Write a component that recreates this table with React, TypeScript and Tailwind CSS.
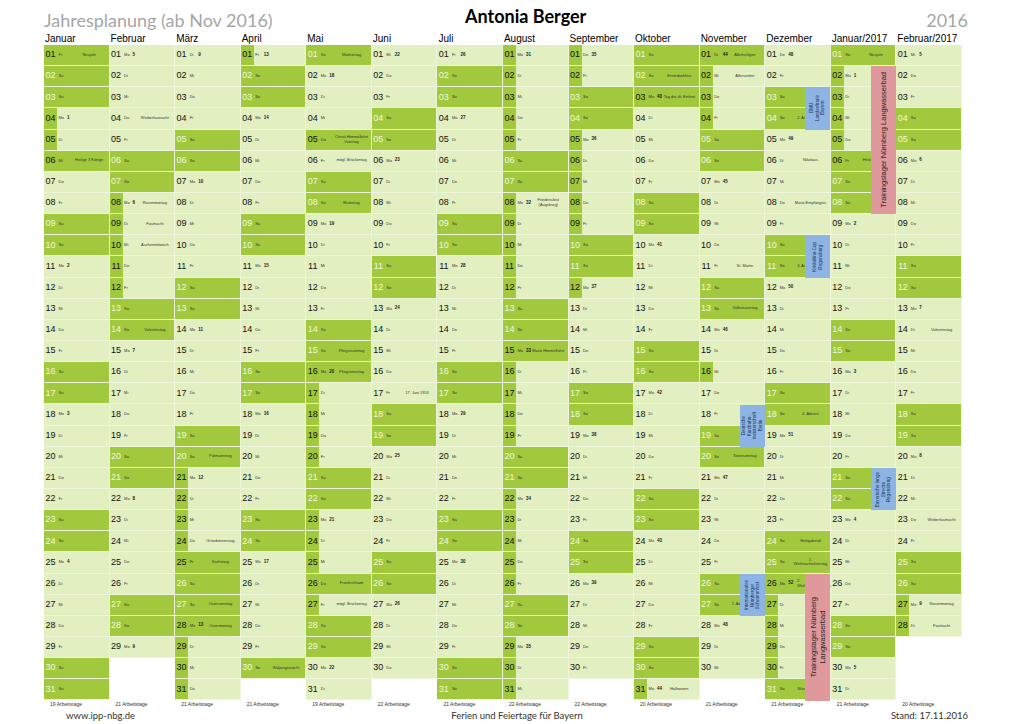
import React from "react";
import clsx from "clsx";

type Month = {
  label: string;
  y: number;
  m: number;
  days: number;
  work: number;
  events: Record<number, string>;
};

const months: Month[] = [
  { label: "Januar", y: 2016, m: 0, days: 31, work: 19, events: { 1: "Neujahr", 6: "Heilige 3 Könige" } },
  {
    label: "Februar", y: 2016, m: 1, days: 29, work: 21,
    events: { 4: "Weiberfastnacht", 8: "Rosenmontag", 9: "Fastnacht", 10: "Aschermittwoch", 14: "Valentinstag" },
  },
  {
    label: "März", y: 2016, m: 2, days: 31, work: 21,
    events: { 20: "Palmsonntag", 24: "Gründonnerstag", 25: "Karfreitag", 27: "Ostersonntag", 28: "Ostermontag" },
  },
  { label: "April", y: 2016, m: 3, days: 30, work: 21, events: { 30: "Walpurgisnacht" } },
  {
    label: "Mai", y: 2016, m: 4, days: 31, work: 19,
    events: {
      1: "Maifeiertag", 5: "Christi Himmelfahrt Vatertag", 6: "mögl. Brückentag", 8: "Muttertag",
      15: "Pfingstsonntag", 16: "Pfingstmontag", 26: "Fronleichnam", 27: "mögl. Brückentag",
    },
  },
  { label: "Juni", y: 2016, m: 5, days: 30, work: 22, events: { 17: "17. Juni 1953" } },
  { label: "Juli", y: 2016, m: 6, days: 31, work: 21, events: {} },
  { label: "August", y: 2016, m: 7, days: 31, work: 22, events: { 8: "Friedensfest (Augsburg)", 15: "Mariä Himmelfahrt" } },
  { label: "September", y: 2016, m: 8, days: 30, work: 22, events: {} },
  { label: "Oktober", y: 2016, m: 9, days: 31, work: 20, events: { 2: "Erntedankfest", 3: "Tag der dt. Einheit", 31: "Halloween" } },
  {
    label: "November", y: 2016, m: 10, days: 30, work: 21,
    events: { 1: "Allerheiligen", 2: "Allerseelen", 11: "St. Martin", 13: "Volkstrauertag", 20: "Totensonntag", 27: "1. Advent" },
  },
  {
    label: "Dezember", y: 2016, m: 11, days: 31, work: 21,
    events: {
      4: "2. Advent", 6: "Nikolaus", 8: "Mariä Empfängnis", 11: "3. Advent", 18: "4. Advent",
      24: "Heiligabend", 25: "1. Weihnachtsfeiertag", 26: "2. Weihnachtsfeiertag", 31: "Silvester",
    },
  },
  { label: "Januar/2017", y: 2017, m: 0, days: 31, work: 21, events: { 1: "Neujahr", 6: "Heilige 3 Könige" } },
  {
    label: "Februar/2017", y: 2017, m: 1, days: 28, work: 20,
    events: { 14: "Valentinstag", 23: "Weiberfastnacht", 27: "Rosenmontag", 28: "Fastnacht" },
  },
];

// gesetzliche Feiertage Bayern (ganze Zeile dunkel)
const holidays = new Set([
  "2016-0-1", "2016-0-6", "2016-2-25", "2016-2-28", "2016-4-1", "2016-4-5", "2016-4-16", "2016-4-26",
  "2016-7-15", "2016-9-3", "2016-10-1", "2016-11-25", "2016-11-26", "2017-0-1", "2017-0-6",
]);

// Schulferien Bayern
const ferien: [number, number][] = [
  [+new Date(2016, 0, 1), +new Date(2016, 0, 5)],
  [+new Date(2016, 1, 8), +new Date(2016, 1, 12)],
  [+new Date(2016, 2, 21), +new Date(2016, 3, 1)],
  [+new Date(2016, 4, 17), +new Date(2016, 4, 28)],
  [+new Date(2016, 6, 30), +new Date(2016, 8, 12)],
  [+new Date(2016, 9, 31), +new Date(2016, 10, 4)],
  [+new Date(2016, 10, 16), +new Date(2016, 10, 16)],
  [+new Date(2016, 11, 24), +new Date(2017, 0, 5)],
  [+new Date(2017, 1, 27), +new Date(2017, 2, 3)],
];

type Overlay = { col: number; from: number; to: number; red?: boolean; lines: string[] };

const overlays: Overlay[] = [
  { col: 10, from: 18, to: 19, lines: ["Deutsche", "Kurzbahn-", "meisterschaft", "Berlin"] },
  { col: 10, from: 26, to: 27, lines: ["Internationales", "Nürnberger", "Schwimmfest"] },
  { col: 11, from: 3, to: 4, lines: ["DMU", "Landesfinale", "Bayern"] },
  { col: 11, from: 10, to: 11, lines: ["Kristallina Cup", "Regensburg"] },
  { col: 11, from: 26, to: 31, red: true, lines: ["Trainingslager Nürnberg", "Langwasserbad"] },
  { col: 12, from: 2, to: 8, red: true, lines: ["Trainingslager Nürnberg Langwasserbad"] },
  { col: 12, from: 21, to: 22, lines: ["Bayerische lange", "Strecke", "Regensburg"] },
];

const WD = ["So", "Mo", "Di", "Mi", "Do", "Fr", "Sa"];
const ROW = 21.15;

function isoWeek(d: Date) {
  const t = new Date(Date.UTC(d.getFullYear(), d.getMonth(), d.getDate()));
  const day = t.getUTCDay() || 7;
  t.setUTCDate(t.getUTCDate() + 4 - day);
  const y0 = new Date(Date.UTC(t.getUTCFullYear(), 0, 1));
  return Math.ceil(((t.getTime() - y0.getTime()) / 86400000 + 1) / 7);
}

function DayCell({ mo, d, covered }: { mo: Month; d: number; covered: boolean }) {
  const date = new Date(mo.y, mo.m, d);
  const wd = date.getDay();
  const weekend = wd === 0 || wd === 6;
  const hol = holidays.has(`${mo.y}-${mo.m}-${d}`);
  const full = weekend || hol;
  const fer = ferien.some(([a, b]) => +date >= a && +date <= b);
  const week = isoWeek(date);
  const showWeek = !weekend && (wd === 1 || d === 1) && week < 53;
  const ev = mo.events[d];

  return (
    <div
      className={clsx(
        "flex h-[21.15px] items-center border-b border-r border-[#eef5da] text-[#333]",
        full ? "bg-[#a2c83d]" : "bg-[#e2efc1]"
      )}
    >
      <div
        className={clsx(
          "flex h-full w-[13px] shrink-0 items-center justify-center text-[9px]",
          fer && !full && "bg-[#a2c83d]",
          weekend ? "text-[#f1f7df]" : "text-[#111]"
        )}
      >
        {String(d).padStart(2, "0")}
      </div>
      <span className="w-[10px] shrink-0 pl-[1.5px] text-[4px]">{WD[wd]}</span>
      <span className="w-[5px] shrink-0 text-[4.5px] font-bold text-[#222]">{showWeek ? week : ""}</span>
      <span
        className={clsx(
          "flex-1 pr-[2px] text-[3.9px] leading-[4.6px]",
          covered ? "pl-[4px] text-left" : "text-center"
        )}
      >
        {ev}
      </span>
    </div>
  );
}

function MonthColumn({ mo, idx }: { mo: Month; idx: number }) {
  const rows = Array.from({ length: 31 }, (_, i) => i + 1);
  const own = overlays.filter((o) => o.col === idx);
  return (
    <div className="w-[65.57px] shrink-0">
      <div className="h-[13px] pl-[1px] text-[10px] leading-[13px] text-black">{mo.label}</div>
      <div className="relative">
        {rows.map((d) =>
          d <= mo.days ? (
            <DayCell key={d} mo={mo} d={d} covered={own.some((o) => d >= o.from && d <= o.to)} />
          ) : (
            <div key={d} className="h-[21.15px] bg-white" />
          )
        )}
        {own.map((o) => (
          <div
            key={o.from}
            className={clsx(
              "absolute left-[40px] flex w-[25px] items-center justify-center",
              o.red ? "bg-[#df989c]" : "bg-[#8eb4e3]"
            )}
            style={{ top: (o.from - 1) * ROW, height: (o.to - o.from + 1) * ROW }}
          >
            <div
              className={clsx(
                "rotate-180 text-center [writing-mode:vertical-rl]",
                o.red ? "text-[7.5px] leading-[9px] text-[#2d2526]" : "text-[4.6px] leading-[5.5px] text-[#17345c]"
              )}
            >
              {o.lines.map((l) => (
                <div key={l}>{l}</div>
              ))}
            </div>
          </div>
        ))}
      </div>
      <div className="h-[9px] pl-[6px] text-[5px] leading-[9px] text-[#333]">{mo.work} Arbeitstage</div>
    </div>
  );
}

export default function App() {
  return (
    <div className="h-[724px] w-[1024px] overflow-hidden bg-white font-['Liberation_Sans',Arial,sans-serif]">
      {/* Kopfzeile */}
      <div className="flex h-[32px] w-[968px] pl-[44px] font-['Lato',sans-serif]">
        <div className="w-[421px] pt-[8px] text-[18px] leading-[24px] text-[#a6a6a6]">Jahresplanung (ab Nov 2016)</div>
        <div className="pt-[4px] text-[18px] font-bold leading-[24px] text-black">Antonia Berger</div>
        <div className="flex-1 pt-[8px] text-right text-[18px] leading-[24px] text-[#a6a6a6]">2016</div>
      </div>

      {/* Kalender */}
      <div className="flex pl-[44px]">
        {months.map((mo, i) => (
          <MonthColumn key={mo.label} mo={mo} idx={i} />
        ))}
      </div>

      {/* Fußzeile */}
      <div className="grid h-[14px] w-[968px] grid-cols-3 items-center pl-[66px] font-['Lato',sans-serif] text-[9.5px] text-[#333]">
        <span>www.ipp-nbg.de</span>
        <span className="text-center">Ferien und Feiertage für Bayern</span>
        <span className="text-right">Stand: 17.11.2016</span>
      </div>
    </div>
  );
}
